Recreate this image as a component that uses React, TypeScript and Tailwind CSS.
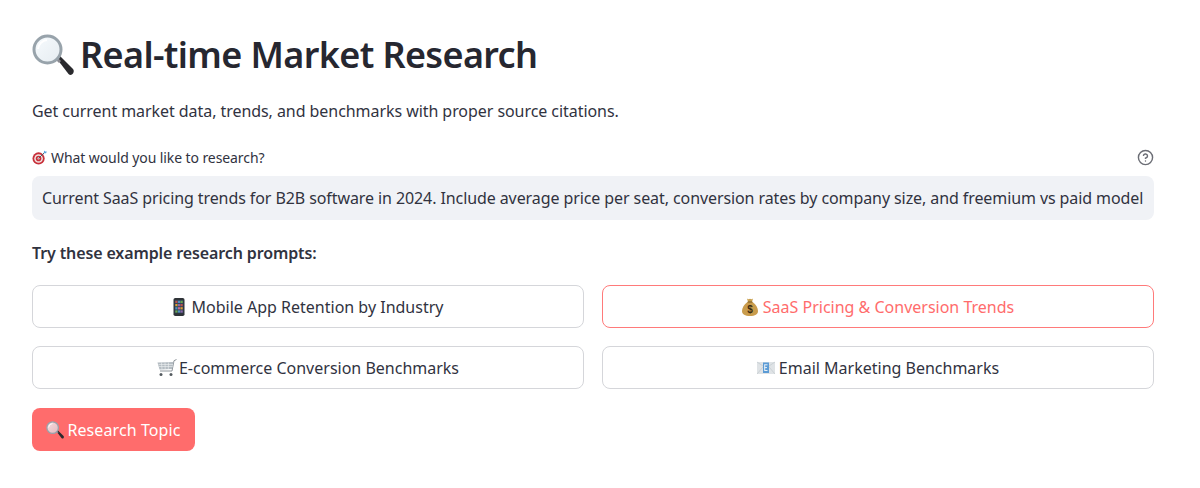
function Magnifier({ className }: { className: string }) {
  return (
    <svg className={className} viewBox="0 0 42 42">
      <defs>
        <linearGradient id="glass" x1="0" y1="0" x2="1" y2="1">
          <stop offset="0" stopColor="#f6fbfe" stopOpacity="0.8" />
          <stop offset="1" stopColor="#d9e3ea" stopOpacity="0.65" />
        </linearGradient>
      </defs>
      <path d="M25 25l3-3 13 13c1 1 1 3 0 4.500s-3 2-4.500 .5z" fill="#2a2a2e" />
      <path d="M24 26l2-2 3 3-2 2z" fill="#8a8a90" />
      <circle cx="15.500" cy="15.500" r="13.500" fill="url(#glass)" stroke="#98a3ab" strokeWidth="3" />
      <path d="M6 15a10 10 0 0 1 9-9" fill="none" stroke="#ffffff" strokeWidth="2" />
    </svg>
  );
}

function Target({ className }: { className: string }) {
  return (
    <svg className={className} viewBox="0 0 16 16">
      <circle cx="7" cy="9" r="6.500" fill="#c8303a" />
      <circle cx="7" cy="9" r="4.600" fill="#f1e6e4" />
      <circle cx="7" cy="9" r="3" fill="#c8303a" />
      <circle cx="7" cy="9" r="1.200" fill="#f1e6e4" />
      <path d="M7 9l6.500-6.500" stroke="#4a5a66" strokeWidth="1" />
      <path d="M12.500 3.500l.5-3 1 1 1.800.2-.8 1.800z" fill="#5aa5dc" />
    </svg>
  );
}

function Phone({ className }: { className: string }) {
  return (
    <svg className={className} viewBox="0 0 12 18">
      <rect x="0.500" y="0" width="11" height="18" rx="1.800" fill="#2f3338" />
      <rect x="1.700" y="2" width="8.600" height="13.200" fill="#33475b" />
      <rect x="2.300" y="2.800" width="2.200" height="2.200" fill="#c0504d" />
      <rect x="5" y="2.800" width="2.200" height="2.200" fill="#4f8fc0" />
      <rect x="7.500" y="2.800" width="2.200" height="2.200" fill="#6aa84f" />
      <rect x="2.300" y="6" width="2.200" height="2.200" fill="#e0a030" />
      <rect x="5" y="6" width="2.200" height="2.200" fill="#8e63a8" />
      <rect x="7.500" y="6" width="2.200" height="2.200" fill="#c0504d" />
      <rect x="2.300" y="9.200" width="2.200" height="2.200" fill="#4f8fc0" />
      <rect x="5" y="9.200" width="2.200" height="2.200" fill="#d16a8a" />
      <rect x="7.500" y="9.200" width="2.200" height="2.200" fill="#e0a030" />
      <rect x="2.300" y="12.400" width="2.200" height="2.200" fill="#6aa84f" />
      <rect x="5" y="12.400" width="2.200" height="2.200" fill="#4f8fc0" />
      <rect x="7.500" y="12.400" width="2.200" height="2.200" fill="#8e63a8" />
    </svg>
  );
}

function MoneyBag({ className }: { className: string }) {
  return (
    <svg className={className} viewBox="0 0 16 18">
      <path d="M5 0.500c1 .8 2 .8 3 .2 1 .6 2 .6 3-.2l-1 3.500h-4z" fill="#c9a04e" />
      <path d="M5.500 4h5C14 6.500 16 10 16 13c0 3.500-3 5-8 5s-8-1.500-8-5c0-3 2-6.500 5.500-9z" fill="#c99c4c" />
      <rect x="5.500" y="3.400" width="5" height="1.200" rx=".5" fill="#7a5a24" />
      <text x="8" y="15" textAnchor="middle" fontSize="10" fontWeight="700" fontFamily="Liberation Sans" fill="#3c2c10">$</text>
    </svg>
  );
}

function Cart({ className }: { className: string }) {
  return (
    <svg className={className} viewBox="0 0 20 18">
      <path d="M19.500 .5l-2.500 1.200L15 12H3" fill="none" stroke="#8e959b" strokeWidth="1" />
      <path d="M0.500 3.500L16.500 3 15 10 2.500 10.500z" fill="#b4bcc2" />
      <path d="M1.500 5.500h14.500M2 7.500h13.500M4.500 3.500l.5 7M8 3.500l.2 7M11.500 3.500l-.2 7" stroke="#eef1f3" strokeWidth=".6" />
      <circle cx="4" cy="15.500" r="1.500" fill="#555b60" />
      <circle cx="14" cy="15.500" r="1.500" fill="#555b60" />
    </svg>
  );
}

function Envelope({ className }: { className: string }) {
  return (
    <svg className={className} viewBox="0 0 18 14">
      <rect x="0" y="1" width="18" height="12" fill="#dfe3e6" />
      <path d="M0 1l9 6 9-6M0 13l6-7M18 13l-6-7" fill="none" stroke="#c2c8cd" strokeWidth=".7" />
      <rect x="6" y="1.500" width="6" height="10.500" fill="#5b9bd5" />
      <path d="M7.500 3.800h3M7.500 6.600h2.500M7.500 9.500h3M7.700 3.500v6.300" stroke="#e8f1f8" strokeWidth="1" />
    </svg>
  );
}

function ExampleButton({
  children,
  active,
}: {
  children: React.ReactNode;
  active?: boolean;
}) {
  return (
    <button
      className={
        active
          ? 'flex h-[43px] items-center justify-center rounded-lg border border-[#ff7a7a] bg-white tracking-[0px] text-[#ff6c6c]'
          : 'flex h-[43px] items-center justify-center rounded-lg border border-[#d5d6da] bg-white tracking-[0px] text-[#31333f]'
      }
    >
      {children}
    </button>
  );
}

export default function App() {
  return (
    <div className="h-[488px] w-[1200px] overflow-hidden bg-white pl-[32px] pr-[46px] pt-[31px] font-['Noto_Sans',sans-serif] text-[16px] text-[#31333f]">
      <h1 className="flex h-[48px] items-center text-[36px] font-semibold tracking-[-0.63px] text-[#262730]">
        <Magnifier className="mr-[6px] h-[42px] w-[42px]" />
        Real-time Market Research
      </h1>

      <p className="mt-[20px] h-[24px] leading-[24px] tracking-[-0.06px]">
        Get current market data, trends, and benchmarks with proper source citations.
      </p>

      <div className="mt-[24px] flex h-[20px] items-center justify-between text-[14px] tracking-[-0.09px]">
        <span className="flex items-center">
          <Target className="mr-[4px] h-[15px] w-[15px]" />
          What would you like to research?
        </span>
        <svg className="h-[17px] w-[17px]" viewBox="0 0 24 24" fill="none" stroke="#6b6d75" strokeWidth="2" strokeLinecap="round" strokeLinejoin="round">
          <circle cx="12" cy="12" r="10" />
          <path d="M9.100 9a3 3 0 0 1 5.800 1c0 2-3 3-3 3" />
          <path d="M12 17h.01" />
        </svg>
      </div>

      <div className="mt-[9px] flex h-[44px] items-center rounded-lg bg-[#f0f2f6] px-[10px] tracking-[-0.09px] whitespace-nowrap">
        Current SaaS pricing trends for B2B software in 2024. Include average price per seat, conversion rates by company size, and freemium vs paid model
      </div>

      <p className="mt-[21px] h-[24px] font-semibold leading-[24px] tracking-[-0.12px]">Try these example research prompts:</p>

      <div className="mt-[20px] grid grid-cols-2 gap-x-[18px] gap-y-[18px]">
        <ExampleButton>
          <Phone className="mr-[7px] h-[18px] w-[12px]" />
          Mobile App Retention by Industry
        </ExampleButton>
        <ExampleButton active>
          <MoneyBag className="mr-[5px] h-[18px] w-[16px]" />
          SaaS Pricing &amp; Conversion Trends
        </ExampleButton>
        <ExampleButton>
          <Cart className="mr-[2px] h-[18px] w-[20px]" />
          E-commerce Conversion Benchmarks
        </ExampleButton>
        <ExampleButton>
          <Envelope className="mr-[4px] h-[14px] w-[18px]" />
          Email Marketing Benchmarks
        </ExampleButton>
      </div>

      <button className="mt-[19px] flex h-[43px] w-[163px] items-center justify-center rounded-lg bg-[#ff6c6c] tracking-[0.1px] text-white">
        <Magnifier className="mr-[3px] h-[18px] w-[18px]" />
        Research Topic
      </button>
    </div>
  );
}
